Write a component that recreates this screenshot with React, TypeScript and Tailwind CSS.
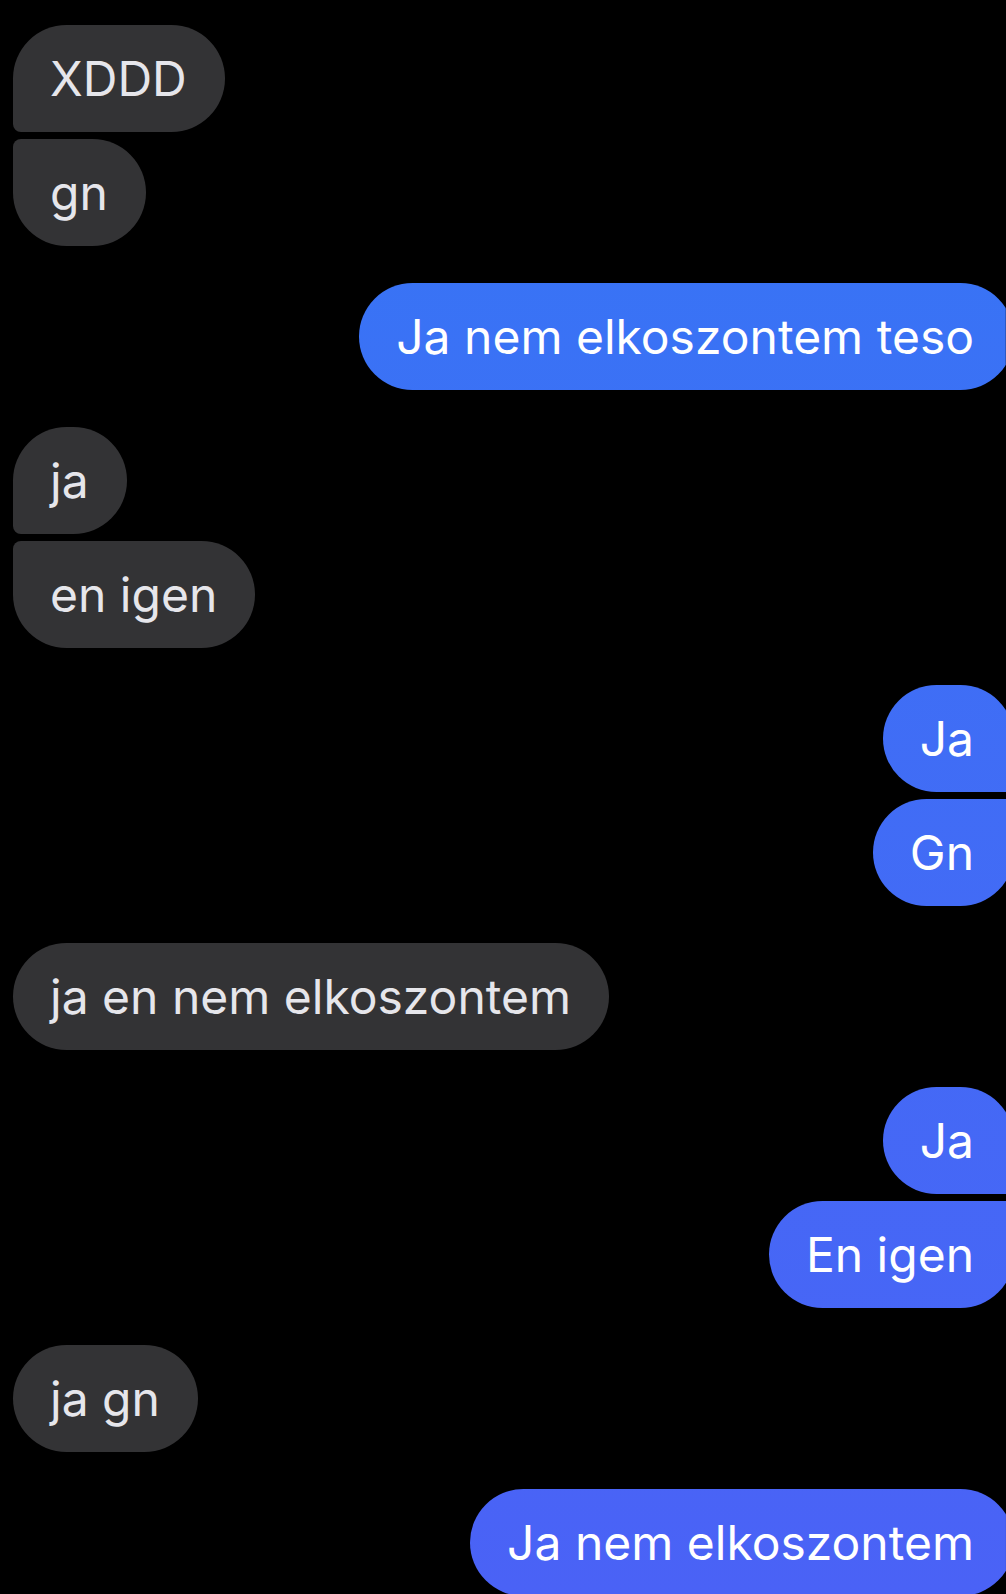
type Msg = { text: string; me: boolean };

const groups: Msg[][] = [
  [
    { text: "XDDD", me: false },
    { text: "gn", me: false },
  ],
  [{ text: "Ja nem elkoszontem teso", me: true }],
  [
    { text: "ja", me: false },
    { text: "en igen", me: false },
  ],
  [
    { text: "Ja", me: true },
    { text: "Gn", me: true },
  ],
  [{ text: "ja en nem elkoszontem", me: false }],
  [
    { text: "Ja", me: true },
    { text: "En igen", me: true },
  ],
  [{ text: "ja gn", me: false }],
  [{ text: "Ja nem elkoszontem", me: true }],
];

function cornerClass(me: boolean, first: boolean, last: boolean) {
  // inner corners of a group are tight, outer stay round
  if (me) {
    if (first && last) return "rounded-[54px]";
    if (first) return "rounded-[54px] rounded-br-[8px]";
    if (last) return "rounded-[54px] rounded-tr-[8px]";
    return "rounded-[54px] rounded-r-[8px]";
  }
  if (first && last) return "rounded-[54px]";
  if (first) return "rounded-[54px] rounded-bl-[8px]";
  if (last) return "rounded-[54px] rounded-tl-[8px]";
  return "rounded-[54px] rounded-l-[8px]";
}

function Bubble({ msg, first, last }: { msg: Msg; first: boolean; last: boolean }) {
  const corners = cornerClass(msg.me, first, last);
  if (msg.me) {
    return (
      <div
        className={`self-end -mr-[8px] h-[107px] flex items-center pl-[37px] pr-[40px] bg-fixed bg-linear-to-b from-[#3476f5] to-[#4a62f6] text-white ${corners}`}
      >
        {msg.text}
      </div>
    );
  }
  return (
    <div
      className={`self-start ml-[13px] h-[107px] flex items-center pl-[37px] pr-[38px] bg-[#333335] text-[#e6e6eb] ${corners}`}
    >
      {msg.text}
    </div>
  );
}

export default function App() {
  return (
    <div className="w-[1006px] h-[1594px] overflow-hidden bg-black pt-[25px] font-['Inter','Liberation_Sans',sans-serif] text-[48px] leading-none">
      <div className="flex flex-col gap-[37px]">
        {groups.map((g, gi) => (
          <div key={gi} className="flex flex-col gap-[7px]">
            {g.map((m, i) => (
              <Bubble key={i} msg={m} first={i === 0} last={i === g.length - 1} />
            ))}
          </div>
        ))}
      </div>
    </div>
  );
}
